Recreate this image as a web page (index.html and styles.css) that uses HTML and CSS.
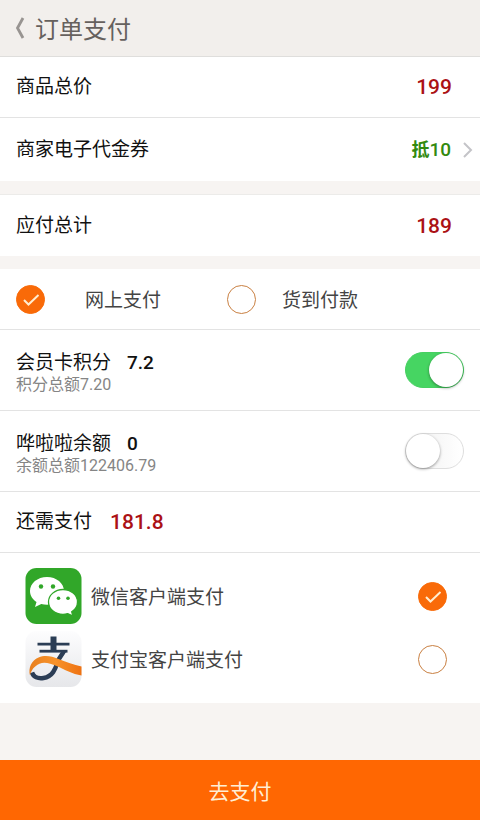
FILE: index.html
```html
<!DOCTYPE html>
<html lang="zh-CN">
<head>
<meta charset="utf-8">
<meta name="viewport" content="width=device-width, initial-scale=1">
<title>订单支付</title>
<link rel="stylesheet" href="styles.css">
</head>
<body>
<form class="page">
  <header class="topbar">
    <button type="button" class="back" aria-label="返回">
      <svg width="10" height="22" viewBox="0 0 10 22"><path d="M8 1 2.500 11 8 21" fill="none" stroke="#989491" stroke-width="2.800"/></svg>
    </button>
    <h1 class="title">订单支付</h1>
  </header>

  <main class="content">
    <section class="group">
      <div class="row">
        <span>商品总价</span>
        <span class="amount push">199</span>
      </div>
      <a class="row voucher" href="#voucher">
        <span>商家电子代金券</span>
        <span class="discount push">抵<span class="figure">10</span></span>
        <svg class="chevron" width="10" height="16" viewBox="0 0 10 16"><path d="m1 1 7 7-7 7" fill="none" stroke="#c4c4c8" stroke-width="2"/></svg>
      </a>
    </section>

    <section class="group lined">
      <div class="row">
        <span>应付总计</span>
        <span class="amount push">189</span>
      </div>
    </section>

    <section class="group">
      <div class="row methods">
        <label class="method"><input class="tick" type="radio" name="method" checked><span>网上支付</span></label>
        <label class="method"><input class="tick" type="radio" name="method"><span>货到付款</span></label>
      </div>
      <div class="row balance">
        <label class="info" for="points">
          <span class="name">会员卡积分<b class="value">7.2</b></span>
          <span class="note">积分总额7.20</span>
        </label>
        <input class="switch" type="checkbox" role="switch" id="points" checked>
      </div>
      <div class="row balance">
        <label class="info" for="wallet">
          <span class="name">哗啦啦余额<b class="value">0</b></span>
          <span class="note">余额总额122406.79</span>
        </label>
        <input class="switch" type="checkbox" role="switch" id="wallet">
      </div>
      <div class="row due">
        <span>还需支付</span>
        <span class="amount">181.8</span>
      </div>
      <div class="channels">
        <label class="channel">
          <svg class="logo" viewBox="0 0 56 56">
            <rect width="56" height="56" rx="11" fill="#31a729"/>
            <path d="M21.500 9C12 9 4.500 15.300 4.500 23c0 4.500 2.500 8.400 6.500 11l-1.500 5 6.300-3.100c1.800.5 3.700.8 5.700.8 9.500 0 17-6 17-13.700S31 9 21.500 9z" fill="#fff"/>
            <circle cx="15.500" cy="18.500" r="2.200" fill="#31a729"/><circle cx="27.500" cy="18.500" r="2.200" fill="#31a729"/>
            <path d="M37.500 21.500C29.500 21.500 23 27 23 34s6.500 12.300 14.500 12.300c1.700 0 3.300-.3 4.800-.7l5.200 2.600-1.300-4.300c3.500-2.200 5.800-5.800 5.800-9.900 0-7-6.500-12.500-14.500-12.500z" fill="#fff" stroke="#31a729" stroke-width="1.300"/>
            <circle cx="33" cy="30.300" r="1.800" fill="#31a729"/><circle cx="42.500" cy="30.300" r="1.800" fill="#31a729"/>
          </svg>
          <span>微信客户端支付</span>
          <input class="tick" type="radio" name="channel" checked>
        </label>
        <label class="channel">
          <svg class="logo" viewBox="0 0 56 56">
            <defs>
              <linearGradient id="tile" x2="0" y2="1"><stop offset="0" stop-color="#fdfdfe"/><stop offset="1" stop-color="#e6e7ea"/></linearGradient>
              <linearGradient id="band"><stop offset="0" stop-color="#e8801f"/><stop offset=".5" stop-color="#f7922a"/><stop offset="1" stop-color="#ee7212"/></linearGradient>
            </defs>
            <rect width="56" height="56" rx="11" fill="url(#tile)"/>
            <g fill="none" stroke="#2b3d55">
              <path d="M12 13.200h32" stroke-width="2.800"/>
              <path d="M14 20.200h28" stroke-width="2.800"/>
              <path d="M28 5.500v15" stroke-width="6"/>
              <path d="M38.500 20c-2 4-5 7-6.500 11-2 7-5 14.500-14 16-5.500.9-10-1-11.500-5.500" stroke-width="4.500"/>
            </g>
            <path d="M4.500 44.500C2.500 37 6 29.500 13 26.500c7-2.800 13-1.200 20 1.500 8 3 15 6 23 7.500v9c-9-1.500-17-6-25-9.500-6-2.500-12-4.500-17-2.300-5.500 2.500-8.300 6.500-9.500 11.800z" fill="url(#band)"/>
          </svg>
          <span>支付宝客户端支付</span>
          <input class="tick" type="radio" name="channel">
        </label>
      </div>
    </section>
  </main>

  <button type="submit" class="pay">去支付</button>
</form>
</body>
</html>
```
FILE: styles.css
```css
* { box-sizing: border-box; }

body {
  margin: 0;
  background: #f7f4f2;
  color: #111;
  font: 19px/28px Roboto, "Noto Sans CJK SC", sans-serif;
}

.page {
  display: flex;
  flex-direction: column;
  min-height: 100vh;
}

.topbar {
  display: flex;
  align-items: center;
  gap: 10px;
  height: 57px;
  padding: 0 15px;
  background: #f2efec;
  border-bottom: 1px solid #dfdedc;
}

.back {
  display: flex;
  padding: 0;
  border: 0;
  background: none;
}

.title,
.method,
.channel,
.pay {
  font-family: "Noto Sans CJK SC", sans-serif;
}

.title {
  margin: 0;
  color: #66615e;
  font-size: 24px;
  font-weight: 400;
}

.content {
  display: flex;
  flex: 1;
  flex-direction: column;
  gap: 13px;
}

.group { background: #fff; }
.lined { border-top: 1px solid #ecebe9; }

.row {
  display: flex;
  align-items: center;
  min-height: 61px;
  padding: 0 16px;
  border-bottom: 1px solid #e3e3e3;
}

.row:last-child { border-bottom: 0; }
.row > .push { margin-right: 12px; }
.push { margin-left: auto; }

.voucher {
  min-height: 63px;
  padding-right: 7px;
  color: inherit;
  text-decoration: none;
}

.amount {
  color: #ab1115;
  font-size: 21px;
  line-height: 30px;
  font-weight: 500;
}

.discount {
  color: #328a10;
  font-size: 18px;
  font-weight: 700;
}

.figure {
  font-size: 19px;
  font-weight: 500;
}

.methods { gap: 66px; }

.method {
  display: flex;
  align-items: center;
  gap: 40px;
  color: #444;
}

.method + .method { gap: 26px; }

.tick {
  appearance: none;
  flex: none;
  width: 29px;
  height: 29px;
  margin: 0;
  border: 1px solid #c98042;
  border-radius: 50%;
}

.tick:checked {
  border-color: #f96a08;
  background: #f96a08 url("data:image/svg+xml,%3Csvg xmlns='http://www.w3.org/2000/svg' viewBox='0 0 27 27'%3E%3Cpath d='m7 14 4.500 4.500L21.500 9' fill='none' stroke='%23ffedcf' stroke-width='2'/%3E%3C/svg%3E") center / 27px;
}

.balance {
  justify-content: space-between;
  min-height: 81px;
}

.info {
  display: flex;
  flex-direction: column;
  padding-top: 6px;
}

.name { line-height: 24px; }

.value {
  margin-left: 16px;
  font-weight: 500;
}

.note {
  color: #858585;
  font-size: 16px;
  line-height: 20px;
}

.switch {
  appearance: none;
  display: flex;
  width: 59px;
  height: 36px;
  margin: 0;
  border: 1px solid #dedede;
  border-radius: 18px;
  background: linear-gradient(90deg, #eee, #fff);
}

.switch::before {
  content: "";
  width: 34px;
  height: 34px;
  border-radius: 50%;
  background: #fff;
  box-shadow: 0 1px 3px #0006;
}

.switch:checked {
  justify-content: flex-end;
  border-color: #46cf61;
  background: #46d562;
}

.due { gap: 18px; }

.channels {
  display: flex;
  flex-direction: column;
  gap: 7px;
  padding: 15px 33px 16px 25px;
}

.channel {
  display: flex;
  align-items: center;
  gap: 9px;
  color: #444;
}

.channel .tick { margin-left: auto; }

.logo {
  flex: none;
  width: 57px;
  height: 56px;
}

.pay {
  height: 60px;
  padding: 0;
  border: 0;
  background: #ff6702;
  color: #ffeed4;
  font-size: 21px;
}
```
